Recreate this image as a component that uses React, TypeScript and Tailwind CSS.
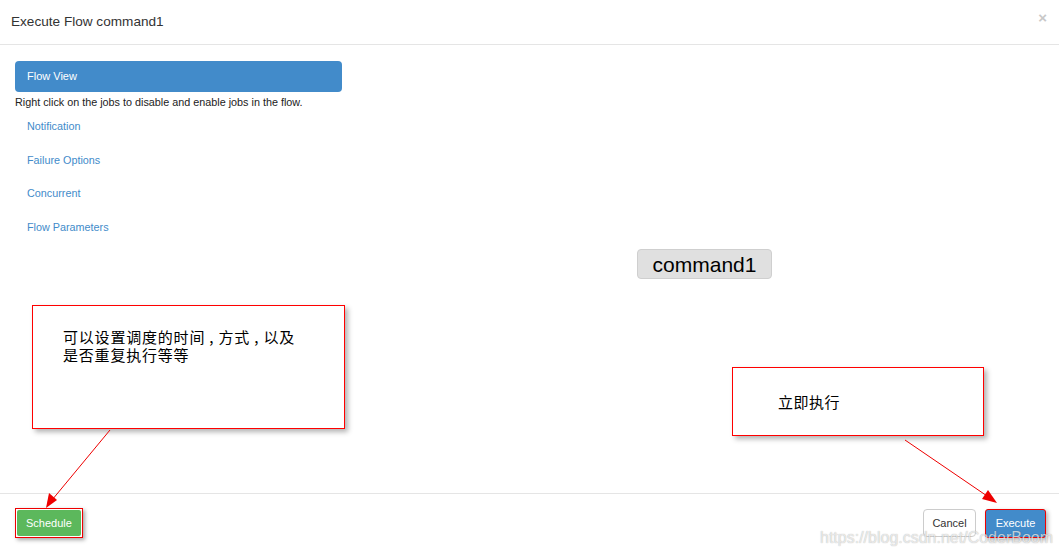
import React from "react";

export default function App() {
  return (
    <div className="relative w-[1059px] h-[552px] bg-white overflow-hidden text-[#333]" style={{ fontFamily: '"Liberation Sans", Arial, sans-serif' }}>
      <div className="flex flex-col h-full">
        {/* header */}
        <div className="h-[45px] border-b border-[#e5e5e5] flex items-center justify-between pl-[11px] pr-[12px] shrink-0">
          <div className="text-[13.6px] text-[#333]">Execute Flow command1</div>
          <div className="text-[#c8c8c8] text-[15px] font-bold leading-none -mt-[10px]">×</div>
        </div>
        {/* body */}
        <div className="flex-1 flex">
          <div className="w-[327px] ml-[15px] pt-[16px] shrink-0">
            <div className="h-[31px] rounded-[4px] bg-[#428bca] text-white text-[11px] flex items-center pl-[12px]">Flow View</div>
            <div className="text-[10.8px] text-[#222] mt-[3px] leading-[14px]">Right click on the jobs to disable and enable jobs in the flow.</div>
            <div className="flex flex-col pl-[12px] mt-[11px] gap-[20.5px] text-[10.8px] text-[#428bca] leading-[13px]">
              <div>Notification</div>
              <div>Failure Options</div>
              <div>Concurrent</div>
              <div>Flow Parameters</div>
            </div>
          </div>
          <div className="flex-1 flex flex-col items-center pt-[204px] pl-[8px]">
            <div className="h-[30px] w-[135px] rounded-[4px] bg-[#e0e0e0] border border-[#cfcfcf] flex items-center justify-center text-[21px] text-black leading-none">command1</div>
          </div>
        </div>
        {/* footer */}
        <div className="h-[59px] border-t border-[#e5e5e5] flex items-center justify-between pl-[15px] pr-[13px] shrink-0">
          <div className="border border-[#e00] p-[1px] shadow-[2px_2px_4px_rgba(0,0,0,0.35)]">
            <div className="h-[26px] px-[9px] bg-[#5cb85c] text-white text-[11px] flex items-center rounded-[2px]">Schedule</div>
          </div>
          <div className="flex items-center gap-[9px]">
            <div className="h-[28px] w-[53px] border border-[#ccc] rounded-[4px] bg-white text-[11px] text-[#333] flex items-center justify-center">Cancel</div>
            <div className="h-[29px] w-[61px] bg-[#428bca] rounded-[3px] border border-[#e00] text-white text-[11px] flex items-center justify-center shadow-[2px_2px_4px_rgba(0,0,0,0.3)]">Execute</div>
          </div>
        </div>
      </div>

      {/* annotation box 1 */}
      <div className="absolute left-[32px] top-[305px] w-[313px] h-[124px] border border-[#f00] bg-white shadow-[3px_3px_5px_rgba(0,0,0,0.3)] pl-[30px] pt-[22px] text-[15px] leading-[18px] tracking-[0.8px] text-black" style={{ fontFamily: '"Noto Sans CJK SC", sans-serif' }}>
        <div>可以设置调度的时间 ,&nbsp;方式 ,&nbsp;以及</div>
        <div>是否重复执行等等</div>
      </div>
      {/* annotation box 2 */}
      <div className="absolute left-[732px] top-[367px] w-[252px] h-[69px] border border-[#f00] bg-white shadow-[3px_3px_5px_rgba(0,0,0,0.3)] pl-[45px] pt-[25px] text-[15px] leading-[18px] tracking-[0.5px] text-black" style={{ fontFamily: '"Noto Sans CJK SC", sans-serif' }}>
        立即执行
      </div>

      {/* arrows */}
      <svg className="absolute left-0 top-0 pointer-events-none" width="1059" height="552">
        <line x1="110" y1="430" x2="52" y2="500" stroke="#e00" strokeWidth="1" />
        <polygon points="46,508 49,493 57,500" fill="#e00" />
        <line x1="905" y1="440" x2="990" y2="498" stroke="#e00" strokeWidth="1" />
        <polygon points="997,503 982,499 988,490" fill="#e00" />
      </svg>

      {/* watermark */}
      <div className="absolute left-[820px] top-[526px] text-[16px] text-white/70 pointer-events-none" style={{ textShadow: "0 0 1px rgba(0,0,0,0.35)" }}>https://blog.csdn.net/CoderBoom</div>
    </div>
  );
}
